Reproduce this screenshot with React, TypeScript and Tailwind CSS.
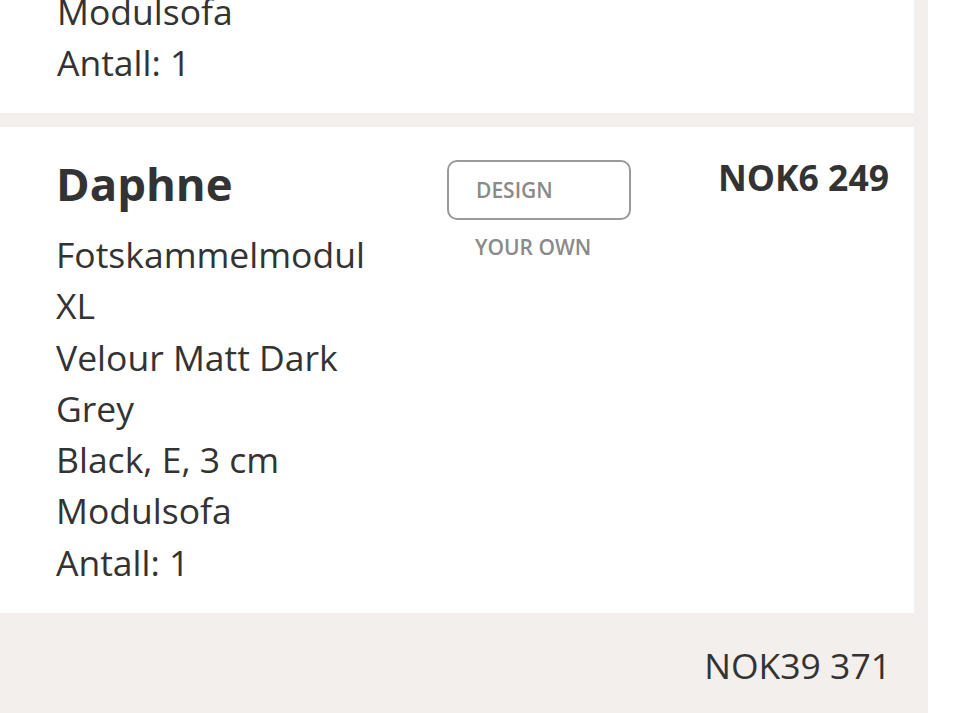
const font = { fontFamily: '"Open Sans", "Noto Sans", sans-serif' };

const lines = [
  "Fotskammelmodul",
  "XL",
  "Velour Matt Dark",
  "Grey",
  "Black, E, 3 cm",
  "Modulsofa",
  "Antall: 1",
];

export default function App() {
  return (
    <div className="flex h-[713px] w-[960px] overflow-hidden bg-white text-[#333]" style={font}>
      <div className="flex w-[928px] flex-col bg-[#f3efec]">
        {/* previous item, cut off at the top */}
        <div className="-mt-[14px] w-[914px] bg-white pb-[25px] pl-[57px] text-[35.5px] leading-[51px]">
          <div>Modulsofa</div>
          <div>Antall: 1</div>
        </div>

        <div className="mt-[14px] flex w-[914px] bg-white">
          <div className="w-[447px] pb-[25px] pl-[56px] pt-[30px]">
            <h2 className="text-[45.5px] font-bold leading-[52px]">Daphne</h2>
            <div className="mt-[20px] text-[35.5px] leading-[51.3px]">
              {lines.map((l) => (
                <div key={l}>{l}</div>
              ))}
            </div>
          </div>

          <div className="w-[184px] pt-[33px]">
            <button className="flex h-[60px] w-[184px] items-center rounded-[10px] border-2 border-[#9a9a9a] pl-[27px] pt-[2px] text-[21px] font-semibold text-[#8a8a8a]">
              DESIGN
            </button>
            <div className="mt-[14px] pl-[28px] text-[21px] font-semibold leading-[26px] text-[#8a8a8a]">
              YOUR OWN
            </div>
          </div>

          <div className="flex-1 pr-[25px] pt-[28px] text-right">
            <div className="text-[35.5px] font-bold leading-[44px]">NOK6 249</div>
          </div>
        </div>

        <div className="flex h-[100px] w-[914px] items-center justify-end pr-[23px] pt-[5px] text-[35.5px]">
          NOK39 371
        </div>
      </div>
    </div>
  );
}
